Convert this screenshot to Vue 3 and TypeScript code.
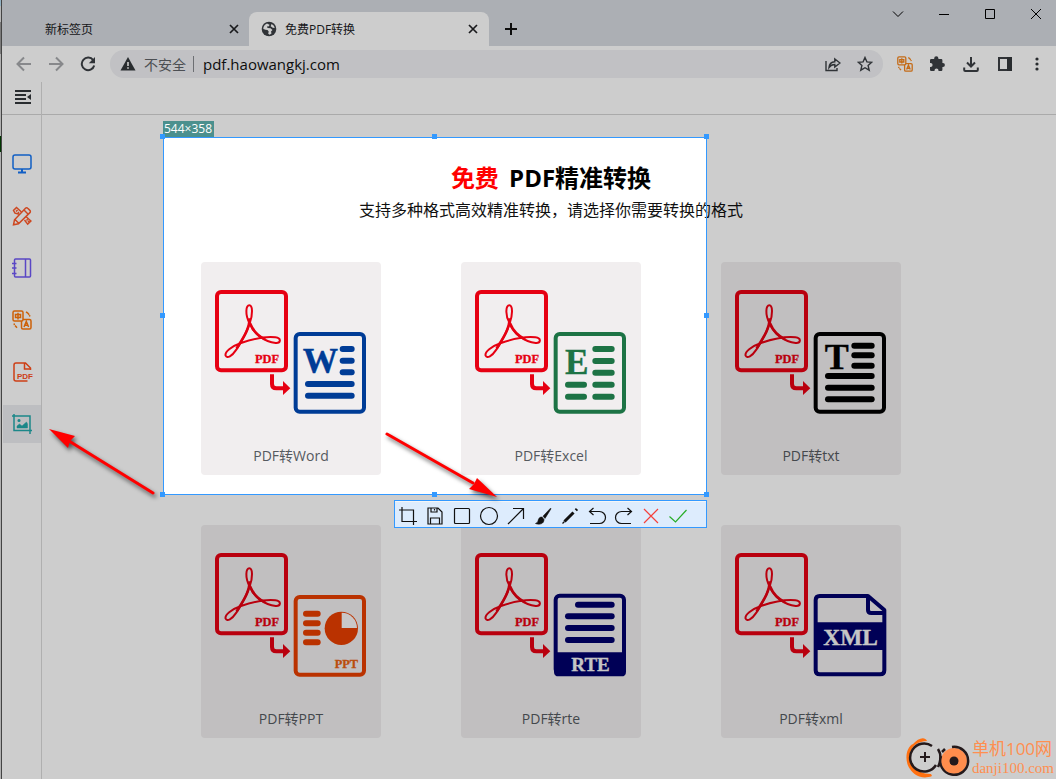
<script setup lang="ts">
import { ref } from 'vue'

interface Tool {
  name: string
  art: string
}
interface Card {
  label: string
  art: string
}

const url = ref('pdf.haowangkj.com')
const activeTool = ref(5)

const translateArt =
  '<rect x="1" y="1" width="10" height="10" rx="1.5"/><path d="M3.500 4.500h5v3h-5zM6 2.800v6.700"/><path d="M11 9.500h6.500A1.500 1.500 0 0 1 19 11v6.500a1.500 1.500 0 0 1-1.500 1.500H11a1.500 1.500 0 0 1-1.500-1.500V11M12 17l2.300-5.500 2.300 5.500M12.800 15.300h3"/><path d="M14 2l1.500.8 1.700 2M17.500 5.200l.3 1.300M2 13.500l.5 1.500M3 15.500l2 2.200"/>'

const sideTools: Tool[] = [
  { name: '桌面', art: '<g stroke="#1677f5"><rect x="1" y="1" width="18" height="14" rx="2"/><path d="M10 15v3M6 18.500h8" stroke-width="2"/></g>' },
  {
    name: '工具',
    art: '<g stroke="#ff5a2a"><path d="M13.500 2.200a1.500 1.500 0 0 1 2.200 0l2.200 2.200a1.500 1.500 0 0 1 0 2.200L6.500 17.800l-5 1 1-5zM12 4l4.200 4.200M3 13.500l3.700 3.700"/><path d="M7.500 8.300L3 7.200 1.500 4.500 4.500 1.500l5 4.500M4 5.500l1.500-1.500M5.800 7.200l1.200-1.200M12.500 14l3.200 4.200 3.200-3.200-5-4.500M14.500 14.500l1.200-1.200M16 16l1.200-1.200"/></g>',
  },
  { name: '笔记', art: '<g stroke="#7059f5"><rect x="2.500" y="1" width="16" height="18" rx="1"/><path d="M13.500 1v18M0 5.500h4.500M0 10h4.500M0 15.500h4.500"/></g>' },
  { name: '翻译', art: '<g stroke="#ff790a">' + translateArt + '</g>' },
  {
    name: 'PDF',
    art: '<g stroke="#ff501d"><path d="M18.500 8V6L13.500 1H4a2 2 0 0 0-2 2v14a2 2 0 0 0 2 2h11.500M12.500 1v6h6"/></g><text x="5" y="16.500" font-size="8" font-weight="700" font-family="Liberation Sans, sans-serif" fill="#ff501d">PDF</text>',
  },
  {
    name: '截图',
    art: '<g stroke="#22a9ab"><path d="M2 0v16.500H20M0 2h18v18"/><circle cx="7" cy="6.500" r=".8" fill="#22a9ab"/><path d="M5 14v-2l2.500-2 2.500 2 4.500-4 1 2v4z" fill="#22a9ab" stroke-width=".5"/></g>',
  },
]

const captureTools: Tool[] = [
  { name: '裁剪', art: '<path d="M4 1v14.500h15M1 4h14.500v15"/>' },
  { name: '保存', art: '<path d="M3 2h10l4 4v12H3zM6 2v4h6V2M9.500 3v1.500M5.500 18v-6h9v6"/>' },
  { name: '矩形', art: '<rect x="2.500" y="2.500" width="15" height="15" rx="1"/>' },
  { name: '椭圆', art: '<circle cx="10" cy="10" r="8.500"/>' },
  { name: '箭头', art: '<path d="M2 18L17.500 2.500M7 2.500h10.500V13"/>' },
  { name: '画刷', art: '<path d="M17.500 2.200l-7.500 8 2 2.200 6-9.600zM9 11c-3 0-3.500 2-4 4-.3 1.500-1.500 2-2.500 2.500 4 1.500 8.500.5 8.500-4z" fill="#111" stroke-width=".6"/>' },
  { name: '画笔', art: '<path d="M4.500 15.500l9-9M15.800 4.200l1.200-1.200" stroke-width="3"/><path d="M2.500 17.500l2-2"/>' },
  { name: '撤销', art: '<path d="M6.500 2L2.500 5.500 6.500 9M2.500 5.500h10a5.500 5.500 0 0 1 0 12H3"/>' },
  { name: '重做', art: '<path d="M13.500 2l4 3.500-4 3.500M17.500 5.500h-10a5.500 5.500 0 0 0 0 12H17"/>' },
  { name: '取消', art: '<path d="M3 3l14 14M17 3L3 17" stroke="#f5413c"/>' },
  { name: '完成', art: '<path d="M1.500 10.500L7.500 16 18.500 4" stroke="#27ad27"/>' },
]

const bars = (rows: [number, number, number][], color: string): string =>
  rows.map(([a, b, y]) => `<path d="M${a} ${y}H${b}" stroke="${color}" stroke-width="18" stroke-linecap="round"/>`).join('')

const frame = (color: string): string =>
  `<rect x="317" y="237" width="205" height="233" rx="12" stroke="${color}" stroke-width="12"/>`

const letters = (text: string, x: number, y: number, size: number, color: string): string =>
  `<text x="${x}" y="${y}" font-size="${size}" font-weight="700" font-family="Liberation Serif, serif" fill="${color}" stroke="${color}" stroke-width="1">${text}</text>`

const pdfArt =
  '<g stroke="#e60012"><rect x="81" y="111" width="207" height="235" rx="12" stroke-width="12"/>' +
  '<path d="M179 205C164 178 168 151 178 151S189 178 179 205" stroke-width="6"/>' +
  '<path d="M179 205C166 243 152 264 139 284S111 311 107 302C103 291 124 274 153 264C188 252 227 244 256 247C276 250 272 265 257 264C225 260 192 239 179 205" stroke-width="6"/>' +
  '<path d="M179 190C179 222 158 251 140 280M180 205C188 225 202 242 225 253" stroke-width="8"/>' +
  '<path d="M246 358v29q0 13 13 13h23" stroke-width="12"/><path d="M279 378l22 22-22 20z" fill="#e60012" stroke="none"/></g>' +
  letters('PDF', 195, 325, 37, '#e60012')

const cards: Card[] = [
  { label: 'PDF转Word', art: frame('#003c96') + letters('W', 338, 354, 106, '#003c96') + bars([[458, 485, 282], [458, 485, 317], [458, 485, 352], [354, 485, 387], [354, 485, 422]], '#003c96') },
  { label: 'PDF转Excel', art: frame('#1d7345') + letters('E', 345, 356, 106, '#1d7345') + bars([[436, 485, 282], [436, 485, 318], [436, 485, 353], [354, 402, 389], [436, 485, 389], [354, 402, 425], [436, 485, 425]], '#1d7345') },
  { label: 'PDF转txt', art: frame('#000') + letters('T', 344, 341, 108, '#000') + bars([[433, 485, 272], [433, 485, 301], [433, 485, 332], [354, 485, 363], [354, 485, 398], [354, 485, 433]], '#000') },
  { label: 'PDF转PPT', art: frame('#e83f00') + bars([[348, 383, 287], [348, 383, 316], [348, 383, 344], [348, 383, 373]], '#e83f00') + '<circle cx="454" cy="331" r="50" fill="#e83f00"/><path d="M455 284v46h46a46 46 0 0 0-46-46z" fill="#faf8f8"/>' + letters('PPT', 434, 449, 37, '#e86010') },
  { label: 'PDF转rte', art: '<g transform="translate(0 -4)">' + frame('#00006c') + '<path d="M312 407h216v58q0 14-14 14H326q-14 0-14-14z" fill="#00006c"/></g>' + bars([[384, 485, 260], [354, 485, 295], [354, 485, 330], [354, 485, 366]], '#00006c') + letters('RTE', 364, 459, 57, '#f5f5f5') },
  { label: 'PDF转xml', art: '<path d="M474 234H329q-12 0-12 12v211q0 12 12 12h182q12 0 12-12V276zM474 234v42q0 9 10 9h39" stroke="#00006c" stroke-width="12" stroke-linejoin="round"/><path d="M314 313h214v83H314z" fill="#00006c"/>' + letters('XML', 340, 381, 70, '#f5f5f5') },
]

const handles = ['nw', 'n', 'ne', 'e', 'se', 's', 'sw', 'w']
</script>

<template>
  <div class="desktop">
    <div class="edge"></div>
    <div class="browser">
      <div class="tabs">
        <div class="tab idle">
          <span class="tab-title">新标签页</span>
          <button class="tab-close" aria-label="关闭标签页"><svg width="10" height="10" viewBox="0 0 10 10"><path d="M1 1l8 8M9 1L1 9" stroke="#202124" stroke-width="1.700" /></svg></button>
        </div>
        <div class="tab current">
          <svg class="globe" width="16" height="16" viewBox="0 0 16 16"><circle cx="8" cy="8" r="7.300" fill="#3c4045" /><path d="M6 2.500C3.500 3.500 2.200 5.500 2.300 8l2.200.8 2 .2 1.200 1.500-.5 2.200 1.500 1 1.800-1.200-.5-2 1.500-1.500-2-1.800-3-.2-.5-1.500L8 5.200l.5-1.500zM10.500 3l-.8 2.200 2 1.500 2 .3c-.3-2-1.500-3.300-3.200-4z" fill="#fff" /></svg>
          <span class="tab-title">免费PDF转换</span>
          <button class="tab-close" aria-label="关闭标签页"><svg width="10" height="10" viewBox="0 0 10 10"><path d="M1 1l8 8M9 1L1 9" stroke="#202124" stroke-width="1.700" /></svg></button>
        </div>
        <button class="new-tab" aria-label="新建标签页"><svg width="12" height="12" viewBox="0 0 12 12"><path d="M6 0v12M0 6h12" stroke="#111" stroke-width="2" /></svg></button>
        <div class="window-keys">
          <button aria-label="搜索标签页"><svg width="12" height="12" viewBox="0 0 12 12"><path d="M1 3.500l5 5 5-5" fill="none" stroke="#000" /></svg></button>
          <button aria-label="最小化"><svg width="12" height="12" viewBox="0 0 12 12"><path d="M1 6.500h10" stroke="#000" /></svg></button>
          <button aria-label="最大化"><svg width="12" height="12" viewBox="0 0 12 12"><path d="M1.500 1.500h9v9h-9z" fill="none" stroke="#000" /></svg></button>
          <button aria-label="关闭"><svg width="12" height="12" viewBox="0 0 12 12"><path d="M1 1l10 10M11 1L1 11" stroke="#000" /></svg></button>
        </div>
      </div>

      <div class="toolbar">
        <button class="key" aria-label="后退"><svg width="16" height="16" viewBox="0 0 16 16"><path d="M15 8H2M8 1.500L1.500 8 8 14.500" class="line pale" /></svg></button>
        <button class="key" aria-label="前进"><svg width="16" height="16" viewBox="0 0 16 16"><path d="M1 8h13M8 1.500L14.500 8 8 14.500" class="line pale" /></svg></button>
        <button class="key" aria-label="重新加载"><svg width="16" height="16" viewBox="0 0 16 16"><path d="M13.200 4.200A6.300 6.300 0 1 0 14.200 9.500" class="line" /><path d="M15 1v6.200H8.800z" fill="#3c4045" /></svg></button>
        <div class="omnibox">
          <button class="security">
            <svg width="16" height="14" viewBox="0 0 16 14"><path d="M8 0l7.500 13.500H.500z" fill="#33373b" /><path d="M8 5v4M8 10.200v1.600" stroke="#fff" stroke-width="1.600" /></svg>
            不安全
          </button>
          <input v-model="url" class="address" aria-label="地址" spellcheck="false" />
          <button class="key" aria-label="分享"><svg width="16" height="16" viewBox="0 0 16 16"><path d="M1 5v9.500h11V12M4 11.500c.3-4 2.500-5.500 5.800-5.700V3L15 7l-5.200 4V8.500c-2.500 0-4.300.8-5.800 3z" class="line thin" /></svg></button>
          <button class="key" aria-label="收藏"><svg width="16" height="16" viewBox="0 0 16 16"><path d="M8 1.500l1.900 4.400 4.800.4-3.600 3.200 1.100 4.700L8 11.700l-4.200 2.500 1.100-4.700L1.300 6.300l4.800-.4z" class="line thin" /></svg></button>
        </div>
        <button class="key first" aria-label="翻译"><svg width="16" height="16" viewBox="0 0 20 20" fill="none" stroke="#f5851c" stroke-width="1.600" v-html="translateArt"></svg></button>
        <button class="key" aria-label="扩展程序"><svg width="16" height="16" viewBox="0 0 16 16"><path d="M1 4.200Q1 3 2.200 3H5.200V2.300a2.100 2.100 0 0 1 4.200 0V3h2.800q1.200 0 1.200 1.200V7h.5a2 2 0 0 1 0 4h-.5v2.800q0 1.200-1.200 1.200H9.500v-.6a2 2 0 0 0-4 0v.6H2.200Q1 15 1 13.800V11h.6a2 2 0 0 0 0-4H1z" fill="#3c4045" /></svg></button>
        <button class="key wide" aria-label="下载"><svg width="16" height="16" viewBox="0 0 16 16"><path d="M8 1v9M4 6.500l4 4 4-4M1.200 11.500V14q0 1 1 1h11.600q1 0 1-1v-2.500" class="line" /></svg></button>
        <button class="key" aria-label="侧边栏"><svg width="14" height="14" viewBox="0 0 14 14"><path d="M1 1h12v12H1z" class="line" /><path d="M9 0h5v14H9z" fill="#33373b" /></svg></button>
        <button class="key" aria-label="菜单"><svg width="4" height="14" viewBox="0 0 4 14" fill="#33373b"><circle cx="2" cy="2" r="1.600" /><circle cx="2" cy="7" r="1.600" /><circle cx="2" cy="12" r="1.600" /></svg></button>
      </div>

      <div class="page">
        <aside class="sidebar">
          <button class="toggle" aria-label="展开菜单"><svg width="17" height="14" viewBox="0 0 17 14"><path d="M0 1h16M0 5h11M0 9h11M0 13h16" stroke="#33373b" stroke-width="2" /><path d="M16 4v6L12 7z" fill="#33373b" /></svg></button>
          <nav class="side-nav">
            <button v-for="(tool, i) in sideTools" :key="tool.name" :class="['side-item', { active: activeTool === i }]" :aria-label="tool.name" @click="activeTool = i">
              <svg width="22" height="20" viewBox="-1 0 22 20" fill="none" stroke-width="1.500" v-html="tool.art"></svg>
            </button>
          </nav>
        </aside>
        <div class="body">
          <header class="page-head"></header>
          <main class="main">
            <h1><span class="free">免费</span> PDF精准转换</h1>
            <p class="lead">支持多种格式高效精准转换，请选择你需要转换的格式</p>
            <div class="cards">
              <a v-for="card in cards" :key="card.label" class="card" href="#">
                <svg width="180" height="178" viewBox="33 21 540 534" fill="none"><g v-html="pdfArt"></g><g v-html="card.art"></g></svg>
                <span>{{ card.label }}</span>
              </a>
            </div>
          </main>
        </div>
      </div>
    </div>

    <div class="capture">
      <div class="selection">
        <span class="size">544×358</span>
        <i v-for="h in handles" :key="h" :class="['handle', h]"></i>
        <div class="capture-bar">
          <button v-for="tool in captureTools" :key="tool.name" :aria-label="tool.name">
            <svg width="20" height="20" viewBox="0 0 20 20" fill="none" stroke="#111" stroke-width="1.200" v-html="tool.art"></svg>
          </button>
        </div>
      </div>
      <svg class="pointers" width="520" height="520" viewBox="0 0 520 520" fill="#f00">
        <path d="M153 493L69 441M387 434L473 483" stroke="#f00" stroke-width="3" stroke-linecap="round" />
        <path d="M49 429l26 7-5 5-2 7zM497 497l-28-8 5-5 3-6z" />
      </svg>
    </div>

    <div class="brand">
      <svg width="64" height="42" viewBox="0 0 64 42" fill="none">
        <path d="M21 4C19-1 12 1 7 7C0 10-2 24 4 32C8 38 16 43 26 39L25 37C17 37 10 34 6 28C2 20 4 12 9 8C13 5 17 4 21 4z" fill="#ff7010" />
        <path d="M26 9A14 14 0 1 0 30 28M32 12Q37 20 32 30M36 15l3-3" stroke="#241a1c" stroke-width="2.500" />
        <path d="M19 15v10M14 20h10" stroke="#241a1c" stroke-width="2" />
        <circle cx="48" cy="24" r="13" fill="#ff8d4d" />
        <path d="M46 10a14 14 0 1 1-11 9" stroke="#241a1c" stroke-width="2.500" />
        <circle cx="48" cy="24" r="4.500" fill="#241a1c" />
      </svg>
      <div class="brand-text"><strong>单机100网</strong><small>danji100.com</small></div>
    </div>
  </div>
</template>

<style>
body {
  margin: 0;
}
</style>

<style scoped>
.desktop {
  position: relative;
  display: flex;
  min-height: 100vh;
  overflow: hidden;
  background: #fff;
  font-family: "Open Sans", "Noto Sans CJK SC", sans-serif;
}
.desktop * {
  box-sizing: border-box;
}
button {
  display: inline-flex;
  align-items: center;
  justify-content: center;
  flex: none;
  padding: 0;
  border: 0;
  background: none;
  font: inherit;
}
svg {
  display: block;
  flex: none;
}
.line {
  fill: none;
  stroke: #3c4045;
  stroke-width: 2;
}
.line.pale {
  stroke: #a8aaad;
}
.line.thin {
  stroke-width: 1.400;
}
.edge {
  width: 2px;
  border-right: 1px solid #555;
  background: linear-gradient(#b5dcf2 0 6px, #e4e4e4 6px 22px, #999 22px 54px, #ddd 54px 136px, #040 136px 152px, #ddd 152px);
}
.browser {
  display: flex;
  flex: 1;
  flex-direction: column;
  min-width: 0;
}
.tabs {
  display: flex;
  align-items: flex-end;
  height: 46px;
  background: #d6dae0;
}
.tab {
  display: flex;
  align-items: center;
  height: 34px;
  padding-right: 10px;
  font-size: 12px;
  color: #202124;
}
.idle {
  width: 247px;
  padding: 0 9px 0 43px;
}
.current {
  width: 240px;
  padding-left: 12px;
  border-radius: 8px 8px 0 0;
  background: #fff;
}
.globe {
  margin-right: 8px;
}
.tab-title {
  flex: 1;
}
.tab-close {
  width: 12px;
  height: 12px;
}
.new-tab {
  width: 44px;
  height: 34px;
}
.window-keys {
  display: flex;
  align-self: flex-start;
  gap: 6px;
  margin-left: auto;
}
.window-keys button {
  width: 40px;
  height: 28px;
}
.toolbar {
  display: flex;
  align-items: center;
  height: 36px;
  padding: 0 3px 0 6px;
}
.key {
  width: 32px;
  height: 28px;
}
.wide {
  width: 36px;
}
.first {
  margin-left: 6px;
}
.omnibox {
  display: flex;
  align-items: center;
  flex: 1;
  min-width: 0;
  height: 28px;
  margin-left: 6px;
  padding: 0 2px 0 10px;
  border-radius: 14px;
  background: #f0f1f4;
}
.security {
  gap: 8px;
  height: 16px;
  padding-right: 7px;
  border-right: 1px solid #888b90;
  font-size: 14px;
  color: #5f6368;
}
.address {
  flex: 1;
  min-width: 0;
  height: 24px;
  padding: 0 0 1px 9px;
  border: 0;
  outline: 0;
  background: none;
  font: inherit;
  font-size: 15px;
  line-height: 22px;
  color: #111;
}
.page {
  display: flex;
  flex: 1;
}
.sidebar {
  flex: none;
  width: 40px;
  border-right: 1px solid #dadada;
}
.toggle {
  width: 100%;
  height: 33px;
  padding: 0 0 3px 3px;
  border-bottom: 1px solid #d4d4d4;
}
.side-nav {
  display: grid;
  gap: 14px;
  padding: 30px 0 0 1px;
}
.side-item {
  height: 38px;
}
.side-item.active {
  background: #ecedf1;
}
.body {
  flex: 1;
}
.page-head {
  height: 33px;
  border-bottom: 1px solid #d4d4d4;
}
.main {
  padding: 47px 0 40px 4px;
  text-align: center;
}
h1 {
  margin: 0;
  font-size: 24px;
  line-height: 32px;
  color: #000;
}
.free {
  margin-right: 4px;
  color: #f00;
}
.lead {
  margin: 4px 0 40px;
  font-size: 16px;
  line-height: 24px;
  color: #111;
}
.cards {
  display: grid;
  grid-template-columns: repeat(3, 180px);
  justify-content: center;
  gap: 50px 80px;
}
.card {
  height: 213px;
  border-radius: 4px;
  background: #f1eeef;
  font-size: 14px;
  line-height: 32px;
  color: #555a5f;
  text-decoration: none;
}
.capture {
  position: absolute;
  inset: 0;
  overflow: hidden;
}
.selection {
  position: absolute;
  top: 137px;
  left: 163px;
  width: 544px;
  height: 358px;
  outline: 1px solid #3399ff;
  outline-offset: -1px;
  box-shadow: 0 0 0 4000px rgba(0, 0, 0, 0.196);
}
.size {
  position: absolute;
  bottom: 100%;
  left: 0;
  padding: 0 2px 0 1px;
  background: #4b908e;
  font-size: 12px;
  line-height: 16px;
  color: #fff;
}
.handle {
  position: absolute;
  width: 5px;
  height: 5px;
  background: #3399ff;
}
.nw, .n, .ne { top: -3px; }
.sw, .s, .se { bottom: -2px; }
.nw, .w, .sw { left: -3px; }
.ne, .e, .se { right: -2px; }
.n, .s { left: calc(50% - 3px); }
.e, .w { top: calc(50% - 3px); }
.capture-bar {
  position: absolute;
  top: calc(100% + 5px);
  right: 0;
  display: flex;
  width: 313px;
  height: 28px;
  border: 1px solid #3399ff;
  background: #ddecfd;
  box-shadow: inset 0 1px #f5f5f5;
}
.capture-bar button {
  width: 27px;
  padding: 4px 2px 0 0;
}
.pointers {
  position: absolute;
  top: 0;
  left: 0;
  filter: drop-shadow(2px 3px 2px rgba(0, 0, 0, 0.6));
}
.brand {
  position: absolute;
  right: 2px;
  bottom: 0;
  display: flex;
  align-items: center;
  gap: 2px;
  color: #ff8f50;
}
.brand-text {
  display: grid;
}
.brand-text strong {
  font-size: 17px;
  font-weight: 400;
  line-height: 20px;
}
.brand-text small {
  font-family: "Liberation Serif", serif;
  font-size: 15px;
  line-height: 18px;
}
</style>
